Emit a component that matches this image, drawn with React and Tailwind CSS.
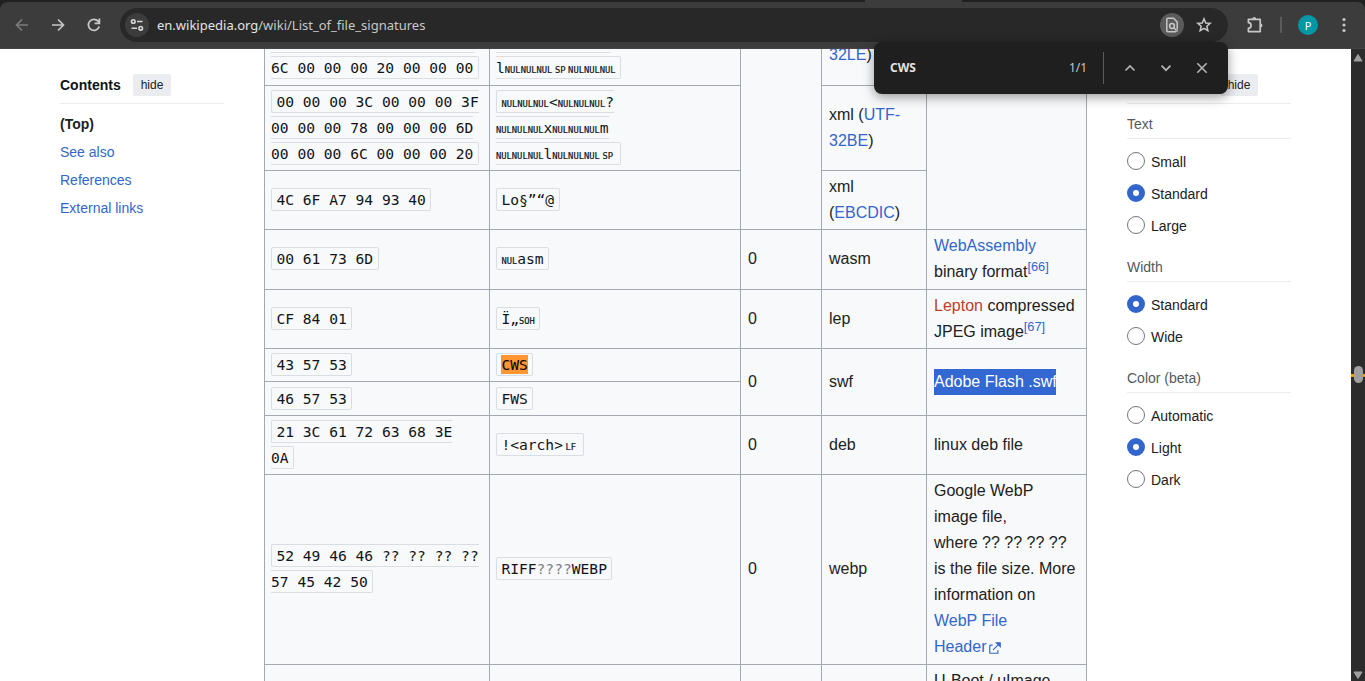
import React from "react";

const label =
  "inline-block w-[15.84px] text-center text-[8.77px] leading-none [-webkit-text-stroke:0.2px_#101418]";
const N = ({ children = "NUL" }) => <span className={label}>{children}</span>;
const N3 = () => (
  <>
    <N />
    <N />
    <N />
  </>
);

function Code({ children }) {
  return (
    <code className="whitespace-nowrap rounded-[2px] border border-[#dadde3] px-[4.4px] py-[2px] font-['DejaVu_Sans_Mono',monospace] text-[14.62px] text-[#101418]">
      {children}
    </code>
  );
}

function Cell({ code, className = "", children }) {
  return (
    <div
      className={`flex flex-col justify-center overflow-hidden border-r border-b border-[#a2a9b1] ${code ? "pl-[6px]" : "pl-[7px]"} ${className}`}
    >
      <div className="whitespace-nowrap leading-[26px]">{children}</div>
    </div>
  );
}

const Link = ({ children, red }) => (
  <a className={red ? "text-[#bf3c2c]" : "text-[#3366cc]"}>{children}</a>
);
const Ref = ({ children }) => (
  <sup className="relative top-[-6px] align-baseline text-[12.8px] leading-none text-[#3366cc]">{children}</sup>
);

function SignatureTable() {
  return (
    <main className="grid w-[823px] shrink-0 grid-cols-[225px_251px_81px_105px_160px] grid-rows-[37px_85px_59px_60px_59px_33px_34px_59px_190px_40px] border-l border-[#a2a9b1] bg-[#f8f9fa] text-[16px] text-[#202122]">
      <Cell code className="justify-end! pb-1">
        <Code>
          <span className="inline-block w-[203px]" />
          <br />
          <span className="inline-block w-[203px]" />
          <br />
          6C 00 00 00 20 00 00 00
        </Code>
      </Cell>
      <Cell code className="justify-end! pb-1">
        <Code>
          <span className="inline-block w-[114px]" />
          <br />
          <span className="inline-block w-[114px]" />
          <br />l<N3 />
          <N>SP</N>
          <N3 />
        </Code>
      </Cell>
      <Cell className="row-span-3" />
      <Cell className="justify-end! pb-[17px]">
        <Link>32LE</Link>)
      </Cell>
      <Cell className="row-span-3" />

      <Cell code>
        <Code>
          00 00 00 3C 00 00 00 3F
          <br />
          00 00 00 78 00 00 00 6D
          <br />
          00 00 00 6C 00 00 00 20
        </Code>
      </Cell>
      <Cell code>
        <Code>
          <N3 />
          {"<"}
          <N3 />?
          <br />
          <N3 />x<N3 />m
          <br />
          <N3 />l<N3 />
          <N>SP</N>
        </Code>
      </Cell>
      <Cell>
        xml (<Link>UTF-</Link>
        <br />
        <Link>32BE</Link>)
      </Cell>

      <Cell code>
        <Code>4C 6F A7 94 93 40</Code>
      </Cell>
      <Cell code>
        <Code>Lo§”“@</Code>
      </Cell>
      <Cell>
        xml
        <br />(<Link>EBCDIC</Link>)
      </Cell>

      <Cell code className="pb-[2px]">
        <Code>00 61 73 6D</Code>
      </Cell>
      <Cell code className="pb-[2px]">
        <Code>
          <N />
          asm
        </Code>
      </Cell>
      <Cell className="pb-[2px]">0</Cell>
      <Cell className="pb-[2px]">wasm</Cell>
      <Cell className="pb-[2px]">
        <Link>WebAssembly</Link>
        <br />
        binary format<Ref>[66]</Ref>
      </Cell>

      <Cell code>
        <Code>CF 84 01</Code>
      </Cell>
      <Cell code>
        <Code>
          Ï„<N>SOH</N>
        </Code>
      </Cell>
      <Cell>0</Cell>
      <Cell>lep</Cell>
      <Cell>
        <Link red>Lepton</Link> compressed
        <br />
        JPEG image<Ref>[67]</Ref>
      </Cell>

      <Cell code>
        <Code>43 57 53</Code>
      </Cell>
      <Cell code>
        <Code>
          <mark className="bg-[#ff9632] py-px text-black">CWS</mark>
        </Code>
      </Cell>
      <Cell className="row-span-2">0</Cell>
      <Cell className="row-span-2">swf</Cell>
      <Cell className="row-span-2">
        <span className="inline-block h-[26px] w-[122px] bg-[#3367d1] align-top text-white">Adobe Flash .swf</span>
      </Cell>

      <Cell code>
        <Code>46 57 53</Code>
      </Cell>
      <Cell code>
        <Code>FWS</Code>
      </Cell>

      <Cell code>
        <Code>
          21 3C 61 72 63 68 3E
          <br />
          0A
        </Code>
      </Cell>
      <Cell code>
        <Code>
          {"!<arch>"}
          <N>LF</N>
        </Code>
      </Cell>
      <Cell>0</Cell>
      <Cell>deb</Cell>
      <Cell>linux deb file</Cell>

      <Cell code className="pb-[2px]">
        <Code>
          52 49 46 46 ?? ?? ?? ??
          <br />
          57 45 42 50
        </Code>
      </Cell>
      <Cell code className="pb-[2px]">
        <Code>
          RIFF<span className="text-[#808080]">????</span>WEBP
        </Code>
      </Cell>
      <Cell className="pb-[2px]">0</Cell>
      <Cell className="pb-[2px]">webp</Cell>
      <Cell className="pb-[2px]">
        Google WebP
        <br />
        image file,
        <br />
        where ?? ?? ?? ??
        <br />
        is the file size. More
        <br />
        information on
        <br />
        <Link>WebP File</Link>
        <br />
        <Link>
          Header
          <svg className="ml-[2px] inline-block h-[14px] w-[14px] align-[-3px]" viewBox="0 0 12 12">
            <path
              fill="#3366cc"
              d="M6 1h5v5L8.860 3.850 4.700 8 4 7.300l4.150-4.160zM2 3h2v1H2v6h6V8h1v2a1 1 0 0 1-1 1H2a1 1 0 0 1-1-1V4a1 1 0 0 1 1-1"
            />
          </svg>
        </Link>
      </Cell>

      <Cell />
      <Cell />
      <Cell />
      <Cell />
      <Cell className="justify-start! pt-[3px]">U-Boot / uImage</Cell>
    </main>
  );
}

function Contents() {
  return (
    <nav className="w-[264px] shrink-0 pt-[25px] pl-[60px] text-[14px] text-[#202122]">
      <div className="flex h-[30px] w-[164px] border-b border-[#eaecf0]">
        <b className="w-[73px] leading-[22px] text-[#101418]">Contents</b>
        <span className="h-[22px] w-[38px] rounded-[2px] bg-[#eaecf0] text-center text-[12px] leading-[22px]">hide</span>
      </div>
      <div className="flex flex-col pt-[6px] leading-[28px]">
        <b>(Top)</b>
        <Link>See also</Link>
        <Link>References</Link>
        <Link>External links</Link>
      </div>
    </nav>
  );
}

function Group({ title, options, selected, className }) {
  return (
    <section className={className}>
      <h3 className="h-[25px] border-b border-[#eaecf0] text-[14px] leading-[20px] text-[#54595d]">{title}</h3>
      <div className="flex flex-col gap-[14px] pt-[13px]">
        {options.map((o) => (
          <div key={o} className="flex h-[18px] items-center gap-[6px] text-[14px]">
            <span
              className={`h-[18px] w-[18px] shrink-0 rounded-full ${o === selected ? "border-[6px] border-[#3366cc]" : "border border-[#72777d]"}`}
            />
            <span className="pt-[2px] leading-[18px]">{o}</span>
          </div>
        ))}
      </div>
    </section>
  );
}

function Appearance() {
  return (
    <aside className="w-[264px] shrink-0 pt-[25px] pl-[40px] text-[#202122]">
      <div className="flex h-[30px] w-[164px] border-b border-[#eaecf0]">
        <span className="ml-[93px] h-[22px] w-[38px] rounded-[2px] bg-[#eaecf0] text-center text-[12px] leading-[22px]">
          hide
        </span>
      </div>
      <Group className="w-[164px] pt-[10px]" title="Text" options={["Small", "Standard", "Large"]} selected="Standard" />
      <Group className="w-[164px] pt-[23px]" title="Width" options={["Standard", "Wide"]} selected="Standard" />
      <Group className="w-[164px] pt-[23px]" title="Color (beta)" options={["Automatic", "Light", "Dark"]} selected="Light" />
    </aside>
  );
}

function ScrollBar() {
  return (
    <div className="flex w-[14px] shrink-0 flex-col items-center bg-[#2c2c2c]">
      <svg className="mt-[5px] h-[8px] w-[10px]" viewBox="0 0 10 8">
        <path d="M5 .5 9 7H1z" fill="#9f9f9f" stroke="#9f9f9f" strokeLinejoin="round" />
      </svg>
      <div className="mt-[304px] flex h-[17px] w-full items-center justify-center bg-[linear-gradient(#2c2c2c_8px,#d98300_8px,#ffb400_9px,#d98300_11px,#2c2c2c_11px)]">
        <div className="h-[17px] w-[9px] rounded-full bg-[#9f9f9f]" />
      </div>
      <svg className="mt-auto mb-[2px] h-[8px] w-[10px]" viewBox="0 0 10 8">
        <path d="M5 7.5 9 1H1z" fill="#9f9f9f" stroke="#9f9f9f" strokeLinejoin="round" />
      </svg>
    </div>
  );
}

function Toolbar() {
  return (
    <header className="flex h-[49px] shrink-0 flex-col bg-[#202222]">
      <div className="flex h-[2px] justify-start">
        <div className="ml-[865px] h-[2px] w-[97px] bg-[#3c3c3c]" />
      </div>
      <div className="flex h-[47px] items-center rounded-t-[8px] border-b border-[#444444] bg-[#3c3c3c]">
        <div className="flex w-[120px] gap-5 pl-[14px]">
          <svg className="h-4 w-4" viewBox="0 0 16 16" fill="none" stroke="#7b7b7b" strokeWidth="1.7">
            <path d="M14 8H3M8 2.500 2.500 8 8 13.500" />
          </svg>
          <svg className="h-4 w-4" viewBox="0 0 16 16" fill="none" stroke="#c7c7c7" strokeWidth="1.7">
            <path d="M2 8h11M8 2.500 13.500 8 8 13.500" />
          </svg>
          <svg className="h-4 w-4" viewBox="0 0 16 16" fill="none" stroke="#c7c7c7" strokeWidth="1.8">
            <path d="M13.200 9.500A5.500 5.500 0 1 1 12 4.200L13.200 5.600M13.400 1.500V6.400H8.600" />
          </svg>
        </div>
        <div className="flex h-[34px] w-[1108px] items-center rounded-full bg-[#282828] pl-[5px]">
          <span className="flex h-6 w-6 items-center justify-center rounded-full bg-[#3c3c3c]">
            <svg className="h-[14px] w-[14px]" viewBox="0 0 14 14" fill="none" stroke="#d6d6d6" strokeWidth="1.6">
              <circle cx="3.300" cy="3.500" r="1.800" />
              <path d="M7 3.500h5.500M1.500 10.300H7" />
              <circle cx="10.700" cy="10.300" r="1.800" />
            </svg>
          </span>
          <span className="ml-2 w-[300px] pt-px font-['Noto_Sans',sans-serif] text-[13px] whitespace-nowrap text-[#c7c7c7]">
            <span className="text-[#e3e3e3]">en.wikipedia.org</span>/wiki/List_of_file_signatures
          </span>
          <span className="ml-auto flex h-6 w-6 items-center justify-center rounded-full bg-[#5b5b5b]">
            <svg className="h-4 w-4" viewBox="0 0 16 16" fill="none" stroke="#c7c7c7" strokeWidth="1.5">
              <path d="M13.200 12.500V5L9.700 1.200H3.800a1 1 0 0 0-1 1V13.800a1 1 0 0 0 1 1H12" />
              <circle cx="8" cy="9" r="2.400" />
              <path d="m9.700 10.700 3.800 3.800" />
            </svg>
          </span>
          <svg className="mr-[16px] ml-[12px] h-4 w-4" viewBox="0 0 16 16" fill="none" stroke="#c7c7c7" strokeWidth="1.5">
            <path d="m8 1.800 1.750 4.150 4.450.38-3.380 2.930 1.020 4.370L8 11.300l-3.840 2.330 1.020-4.370L1.800 6.330l4.450-.38z" />
          </svg>
        </div>
        <svg className="ml-[18px] h-[18px] w-[18px]" viewBox="0 0 18 18" fill="none" stroke="#c7c7c7" strokeWidth="1.700">
          <path
            d="M2.400 3.300H14.200V15.600H2.400V12.300C4.200 12.100 5.100 11 5.100 9.500S4.200 6.900 2.400 6.700z"
            strokeLinejoin="round"
          />
          <path d="M6.300 3a1.900 1.900 0 0 1 3.800 0zM14.500 7.600a1.900 1.900 0 0 1 0 3.800z" fill="#c7c7c7" stroke="none" />
        </svg>
        <div className="ml-[16px] h-4 w-[2px] bg-[#5b5b5b]" />
        <span className="ml-[16px] flex h-5 w-5 items-center justify-center rounded-full bg-[#0097a7] font-['Noto_Sans',sans-serif] text-[11px] leading-none text-white">
          P
        </span>
        <svg className="ml-[18px] h-4 w-4" viewBox="0 0 16 16" fill="#c7c7c7">
          <circle cx="8" cy="2.500" r="1.600" />
          <circle cx="8" cy="8" r="1.600" />
          <circle cx="8" cy="13.500" r="1.600" />
        </svg>
      </div>
    </header>
  );
}

function FindBar() {
  return (
    <div className="absolute top-[42px] left-[874px] flex h-[52px] w-[354px] items-center rounded-[8px] bg-[#1f1f1f] pl-4 font-['Noto_Sans',sans-serif] text-[12px] shadow-[0_3px_12px_rgba(0,0,0,0.4)]">
      <span className="w-[179px] font-bold text-[#e3e3e3]">CWS</span>
      <span className="w-[34px] text-[#c7c7c7]">1/1</span>
      <div className="h-8 w-px bg-[#5b5b5b]" />
      <svg className="ml-[18px] h-4 w-4" viewBox="0 0 16 16" fill="none" stroke="#b4b4b4" strokeWidth="1.700">
        <path d="m3.500 10.500 4.500-4.500 4.500 4.500" />
      </svg>
      <svg className="ml-[20px] h-4 w-4" viewBox="0 0 16 16" fill="none" stroke="#b4b4b4" strokeWidth="1.700">
        <path d="m3.500 5.700 4.500 4.500 4.500-4.500" />
      </svg>
      <svg className="ml-[20px] h-4 w-4" viewBox="0 0 16 16" fill="none" stroke="#b4b4b4" strokeWidth="1.600">
        <path d="m3.300 3.300 9.400 9.400M12.700 3.300l-9.400 9.400" />
      </svg>
    </div>
  );
}

export default function App() {
  return (
    <div className="relative flex h-[681px] w-[1365px] flex-col overflow-hidden bg-white font-['Liberation_Sans',Arial,sans-serif]">
      <Toolbar />
      <div className="flex h-[632px] overflow-hidden">
        <Contents />
        <SignatureTable />
        <Appearance />
        <ScrollBar />
      </div>
      <FindBar />
    </div>
  );
}
